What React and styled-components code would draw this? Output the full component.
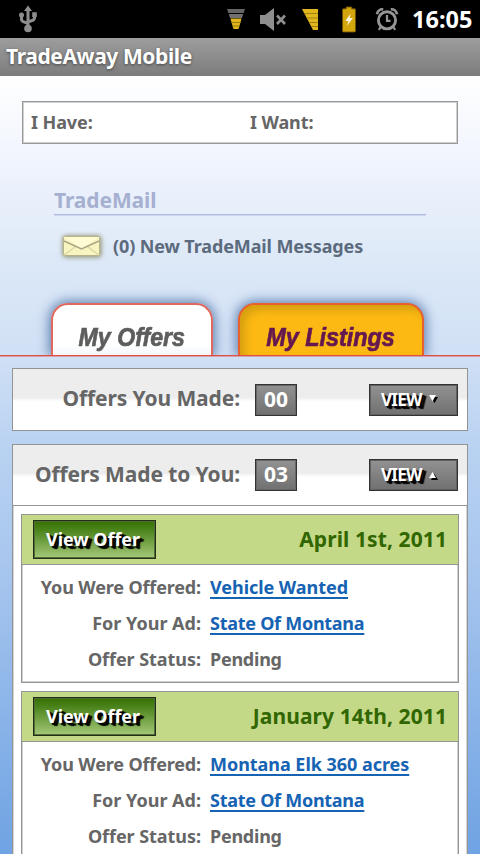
import React from 'react';
import styled, { createGlobalStyle } from 'styled-components';

const Global = createGlobalStyle`
  * { box-sizing: border-box; }
  html, body { margin: 0; padding: 0; overflow: hidden; }
  body { font-family: "Noto Sans", "Open Sans", sans-serif; font-weight: 700; }
`;

const Screen = styled.div`
  width: 480px;
  height: 854px;
  overflow: hidden;
  display: flex;
  flex-direction: column;
`;

const StatusBar = styled.header`
  flex: none;
  height: 38px;
  display: flex;
  align-items: center;
  background: #000;
  padding: 0 8px 0 18px;
`;

const StatusIcons = styled.div`
  display: flex;
  align-items: center;
  margin-left: auto;
`;

const Glyph = styled.svg`
  display: block;
  flex: none;
  overflow: visible;
  margin-left: ${(p) => p.$gap || 0}px;
`;

const Clock = styled.time`
  width: 60px;
  margin-left: 14px;
  color: #fff;
  font-size: 23.5px;
  line-height: 36px;
`;

const TitleBar = styled.h1`
  flex: none;
  margin: 0;
  height: 38px;
  padding-left: 6px;
  background: linear-gradient(#9d9d9d, #7c7c7c);
  color: #fff;
  font-size: 21px;
  line-height: 37px;
  letter-spacing: -0.4px;
  text-shadow: 0 1px 3px #444;
`;

const Page = styled.main`
  flex: 1;
  min-height: 0;
  background: linear-gradient(
    #fff 0,
    #f0f4fd 85px,
    #dce8f7 190px,
    #d0e0f5 280px,
    #bad3f2 365px,
    #a6c5ee 500px,
    #6fa3e3 778px
  );
`;

const TradeBox = styled.section`
  display: grid;
  grid-template-columns: 219px 1fr;
  align-items: center;
  height: 43px;
  margin: 25px 22px 0;
  padding-left: 8px;
  border: 1px solid #999;
  box-shadow: inset 0 0 0 1px #d0d0d0;
  background: #fff;
  color: #666;
  font-size: 18px;
  letter-spacing: -0.1px;
`;

const TradeLabel = styled.span`
  line-height: 40px;
  margin-top: -2px;
`;

const MailHeading = styled.h2`
  margin: 42px 54px 0;
  height: 29px;
  border-bottom: 1px solid #b1bde2;
  box-shadow: 0 1px 0 #cdd7ee;
  color: #a6b0d0;
  font-size: 21px;
  line-height: 28px;
  letter-spacing: -0.1px;
`;

const MailRow = styled.div`
  display: flex;
  align-items: center;
  gap: 8px;
  height: 36px;
  margin: 13px 0 0 59px;
  color: #5c6a7d;
  font-size: 18px;
  letter-spacing: -0.12px;
`;

const Tabs = styled.nav`
  display: flex;
  align-items: flex-end;
  gap: 25px;
  height: 77px;
  margin-top: 15px;
  padding: 0 0 0 51px;
  border-bottom: 1px solid #de5045;
  box-shadow: 0 1px 0 #d99fa8;
  overflow: hidden;
`;

const Tab = styled.div`
  display: flex;
  justify-content: center;
  width: ${(p) => (p.$active ? 162 : 186)}px;
  height: 52px;
  border: 2px solid ${(p) => (p.$active ? '#e0695f' : '#e8602c')};
  border-bottom: 0;
  border-radius: 17px 17px 0 0;
  background: ${(p) => (p.$active ? 'linear-gradient(#fff 80%, #f3f5fa)' : '#fdb913')};
  box-shadow: 0 0 12px 2px #5d7fae
    ${(p) => (p.$active ? '' : ', inset 5px 5px 9px #d59f10')};
  color: ${(p) => (p.$active ? '#5d5d5d' : '#64184f')};
`;

const TabText = styled.span`
  font: italic 700 26px/30px "Liberation Sans", Arial, sans-serif;
  white-space: nowrap;
  -webkit-text-stroke: 0.7px currentColor;
  transform: scaleX(${(p) => p.$stretch});
  padding-top: 17px;
`;

const Panel = styled.section`
  margin: ${(p) => p.$top}px 12px 0;
  border: 1px solid #949494;
  box-shadow: inset 0 0 0 1px #d6d6d6;
  background: #fff;
`;

const PanelHead = styled.div`
  display: flex;
  align-items: center;
  height: 61px;
  padding-right: 9px;
  background: linear-gradient(#ededed 0, #ededed 47%, #fff 53%);
  border-bottom: ${(p) => (p.$open ? '1px solid #949494' : '0')};
`;

const PanelTitle = styled.h3`
  width: 227px;
  margin: 0 15px 3px 0;
  text-align: right;
  color: #666;
  font-size: 21px;
  line-height: 30px;
  letter-spacing: -0.1px;
  white-space: nowrap;
`;

const Count = styled.span`
  width: 42px;
  height: 32px;
  border: 1px solid #333;
  box-shadow: inset 0 0 0 1px #666;
  background: linear-gradient(#929292, #707070);
  color: #fff;
  font-size: 21px;
  line-height: 28px;
  text-align: center;
`;

const ViewButton = styled.button`
  display: flex;
  align-items: center;
  gap: 7px;
  width: 89px;
  height: 32px;
  margin-left: auto;
  padding: 0 0 0 11px;
  border: 1px solid #333;
  box-shadow: inset 0 0 0 1px #606060;
  background: linear-gradient(#929292, #707070);
  color: #fff;
  font: 700 17px/30px "Noto Sans", sans-serif;
  letter-spacing: -0.7px;
  text-shadow: 2px 2px 1px #000, 4px 3px 1px #000;
`;

const Arrow = styled.svg`
  margin-top: -2px;
  overflow: visible;
  filter: drop-shadow(2px 2px 0.5px #000);
`;

const Offers = styled.div`
  display: flex;
  flex-direction: column;
  gap: 8px;
  padding: 8px 8px;
`;

const Card = styled.article`
  height: 169px;
  border: 1px solid #949494;
  box-shadow: inset 0 0 0 1px #d0d0d0;
`;

const CardHead = styled.div`
  display: flex;
  align-items: center;
  justify-content: space-between;
  height: 50px;
  padding: 0 11px;
  border-bottom: 1px solid #949494;
  background: #c3d988;
`;

const OfferButton = styled.button`
  width: 123px;
  height: 39px;
  padding: 0 3px 0 0;
  border: 1px solid #222d18;
  box-shadow: inset 0 0 0 1px #4f6d36;
  background: linear-gradient(#377000 0, #478017 20%, #a5c878 100%);
  color: #fff;
  font: 700 18px/37px "Noto Sans", sans-serif;
  letter-spacing: -0.05px;
  text-shadow: 2px 2px 1px #000, 4px 3px 1px #000;
`;

const OfferDate = styled.time`
  color: #316600;
  font-size: 21px;
  line-height: 46px;
  margin-top: -2px;
  letter-spacing: 0.1px;
`;

const Details = styled.dl`
  display: grid;
  grid-template-columns: 179px 1fr;
  grid-auto-rows: 36px;
  column-gap: 9px;
  margin: 4px 0 0;
  color: #666;
  font-size: 18px;
  line-height: 36px;
`;

const Term = styled.dt`
  text-align: right;
  letter-spacing: ${(p) => p.$spacing}px;
`;

const Value = styled.dd`
  margin: 0;
  letter-spacing: -0.25px;
`;

const Link = styled.a`
  color: #1663b3;
  letter-spacing: ${(p) => p.$spacing}px;
  text-decoration: underline;
  text-decoration-thickness: 1.5px;
  text-underline-offset: 2.5px;
  text-decoration-skip-ink: none;
`;

const UsbIcon = () => (
  <Glyph width="20" height="28" viewBox="0 0 20 28" fill="none" stroke="#8d8d8d" strokeWidth="3">
    <path d="M10 4v19M3.500 10v4.500c0 3.500 6.500 2 6.500 5M16.500 10v3c0 4-6.500 2-6.500 5" />
    <path d="M10 .5l4 5.500H6z" fill="#8d8d8d" stroke="none" />
    <circle cx="10" cy="23.500" r="3.800" fill="#8d8d8d" stroke="none" />
    <circle cx="3.500" cy="10" r="2.500" fill="#8d8d8d" stroke="none" />
    <path d="M14.200 7.300h4.600V12h-4.600z" fill="#8d8d8d" stroke="none" />
  </Glyph>
);

const WifiIcon = () => (
  <Glyph width="18" height="20" viewBox="0 0 18 20">
    <path d="M0 0h18l-1.400 4H1.400z" fill="#656565" />
    <path d="M1.700 5h14.600l-1.400 4H3.100z" fill="#707070" />
    <path d="M3.400 9.600h11.200L11.500 20h-5z" fill="#e1b51d" />
    <path d="M4 13.500h10M5 17h8" stroke="#8a6b08" strokeWidth="0.800" />
  </Glyph>
);

const MuteIcon = () => (
  <Glyph $gap={15} width="26" height="23" viewBox="0 0 26 23">
    <path d="M0 7h5l9-7v23l-9-7H0z" fill="#8e8e8e" />
    <path d="M17 7.500l8 8.500M25 7.500L17 16" stroke="#8e8e8e" strokeWidth="2.600" />
  </Glyph>
);

const SignalIcon = () => (
  <Glyph $gap={16} width="16" height="21" viewBox="0 0 16 21">
    <path d="M0 0h16v21h-5z" fill="#e1b51d" />
    <path d="M2.200 4.500H16M4.600 9H16M7 13.500h9M9.200 17.500H16" stroke="#9c7b10" strokeWidth="0.900" />
  </Glyph>
);

const BatteryIcon = () => (
  <Glyph $gap={24} width="14" height="25" viewBox="0 0 14 27">
    <path d="M4 0h6v2h3c.6 0 1 .4 1 1v23c0 .6-.4 1-1 1H1c-.6 0-1-.4-1-1V3c0-.6.400-1 1-1h3z" fill="#d4a60d" stroke="#705500" strokeWidth="1" />
    <path d="M8.700 7L3 15h3.400l-1.800 5.500L11.300 12H7.700z" fill="#fff6d8" />
  </Glyph>
);

const AlarmIcon = () => (
  <Glyph $gap={20} width="22" height="23" viewBox="0 0 22 23" fill="none" stroke="#969696">
    <circle cx="11" cy="12.300" r="8.600" strokeWidth="2.900" />
    <path d="M11 7v5.800h3.500" strokeWidth="2.200" />
    <path d="M1 6.200C1.500 3 4 1 7.200 1.300M21 6.200C20.500 3 18 1 14.800 1.300" strokeWidth="2.700" />
    <path d="M5 18.500L2.800 21.800M17 18.500l2.200 3.300" strokeWidth="2.200" />
  </Glyph>
);

const EnvelopeSvg = styled(Glyph)`
  filter: drop-shadow(0 0 2px #9b9c78) drop-shadow(1px 1px 2px #abb3a8);
`;

const EnvelopeIcon = () => (
  <EnvelopeSvg width="46" height="30" viewBox="0 0 46 30">
    <rect x="4.500" y="5.500" width="36" height="19" rx="1" fill="#f9f5c0" stroke="#b6b38c" />
    <path d="M5 24l13-9.500M40 24l-13-9.500" stroke="#d9d6aa" fill="none" strokeWidth="1.300" />
    <path d="M5 6h35L22.500 18z" fill="#fffbd2" />
    <path d="M5 10L22.500 18 40 10" stroke="#aaa786" fill="none" strokeWidth="1.500" />
  </EnvelopeSvg>
);

function OfferPanelHead({ title, count, open }) {
  return (
    <PanelHead $open={open}>
      <PanelTitle>{title}</PanelTitle>
      <Count>{count}</Count>
      <ViewButton>
        VIEW
        <Arrow width="7" height="7" viewBox="0 0 8 8">
          <path d={open ? 'M0 8L4 1l4 7z' : 'M0 0h8L4 7z'} fill="#fff" />
        </Arrow>
      </ViewButton>
    </PanelHead>
  );
}

function OfferCard({ date, offered, ad, status, spacing }) {
  return (
    <Card>
      <CardHead>
        <OfferButton>View Offer</OfferButton>
        <OfferDate>{date}</OfferDate>
      </CardHead>
      <Details>
        <Term $spacing={-0.15}>You Were Offered:</Term>
        <Value><Link $spacing={spacing}>{offered}</Link></Value>
        <Term $spacing={0}>For Your Ad:</Term>
        <Value><Link $spacing={-0.27}>{ad}</Link></Value>
        <Term $spacing={-0.05}>Offer Status:</Term>
        <Value>{status}</Value>
      </Details>
    </Card>
  );
}

const offers = [
  { date: 'April 1st, 2011', offered: 'Vehicle Wanted', ad: 'State Of Montana', status: 'Pending', spacing: -0.05 },
  { date: 'January 14th, 2011', offered: 'Montana Elk 360 acres', ad: 'State Of Montana', status: 'Pending', spacing: -0.04 },
];

export default function App() {
  return (
    <Screen>
      <Global />
      <StatusBar>
        <UsbIcon />
        <StatusIcons>
          <WifiIcon />
          <MuteIcon />
          <SignalIcon />
          <BatteryIcon />
          <AlarmIcon />
        </StatusIcons>
        <Clock>16:05</Clock>
      </StatusBar>
      <TitleBar>TradeAway Mobile</TitleBar>
      <Page>
        <TradeBox>
          <TradeLabel>I Have:</TradeLabel>
          <TradeLabel>I Want:</TradeLabel>
        </TradeBox>
        <MailHeading>TradeMail</MailHeading>
        <MailRow>
          <EnvelopeIcon />
          (0) New TradeMail Messages
        </MailRow>
        <Tabs>
          <Tab $active><TabText $stretch={0.89}>My Offers</TabText></Tab>
          <Tab><TabText $stretch={0.9}>My Listings</TabText></Tab>
        </Tabs>
        <Panel $top={12}>
          <OfferPanelHead title="Offers You Made:" count="00" />
        </Panel>
        <Panel $top={13}>
          <OfferPanelHead title="Offers Made to You:" count="03" open />
          <Offers>
            {offers.map((o) => <OfferCard key={o.date} {...o} />)}
          </Offers>
        </Panel>
      </Page>
    </Screen>
  );
}
